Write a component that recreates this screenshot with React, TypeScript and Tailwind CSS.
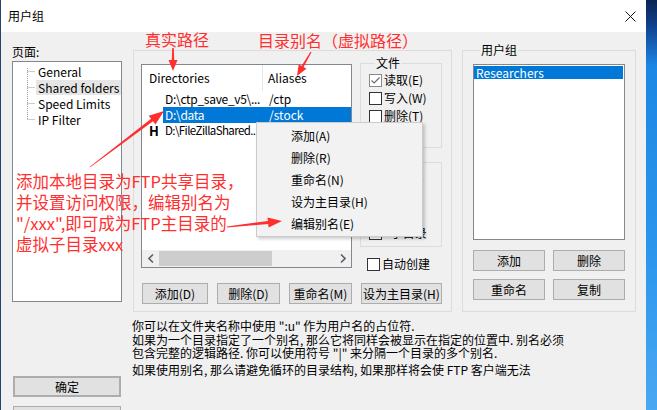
import React from "react";

const RED = "#ff2f2f";

// tapered arrow polygon: thin tail, wide head
function arrowPoints(x1: number, y1: number, x2: number, y2: number, head = 12, wing = 5, shaft = 1.5, tail = 0.5) {
  const dx = x2 - x1;
  const dy = y2 - y1;
  const len = Math.hypot(dx, dy);
  const ux = dx / len;
  const uy = dy / len;
  const nx = -uy;
  const ny = ux;
  const bx = x2 - ux * head;
  const by = y2 - uy * head;
  const p = (x: number, y: number) => `${x.toFixed(1)},${y.toFixed(1)}`;
  return [
    p(x1 + nx * tail, y1 + ny * tail),
    p(bx + nx * shaft, by + ny * shaft),
    p(bx + nx * wing, by + ny * wing),
    p(x2, y2),
    p(bx - nx * wing, by - ny * wing),
    p(bx - nx * shaft, by - ny * shaft),
    p(x1 - nx * tail, y1 - ny * tail),
  ].join(" ");
}

function Check({ label, checked = false }: { label: string; checked?: boolean }) {
  return (
    <div className="flex h-[18px] items-center gap-[2px] whitespace-nowrap">
      <span
        className={`flex h-[13px] w-[13px] shrink-0 items-center justify-center border bg-white ${
          checked ? "border-[#8a8a8a]" : "border-[#333333]"
        }`}
      >
        {checked && (
          <svg width="9" height="7" viewBox="0 0 9 7">
            <polyline points="0.5,3.5 3.2,6 8.5,0.5" fill="none" stroke="#6e6e6e" strokeWidth="1.2" />
          </svg>
        )}
      </span>
      <span className="leading-[14px]">{label}</span>
    </div>
  );
}

function Btn({ children, className = "" }: { children: React.ReactNode; className?: string }) {
  return (
    <button className={`flex h-[21px] shrink-0 items-center justify-center border border-[#adadad] bg-[#e1e1e1] leading-[14px] ${className}`}>
      {children}
    </button>
  );
}

function Chevron({ dir }: { dir: "left" | "right" }) {
  return (
    <svg width="6" height="9" viewBox="0 0 6 9">
      <polyline
        points={dir === "left" ? "5,0.5 1,4.5 5,8.5" : "1,0.5 5,4.5 1,8.5"}
        fill="none"
        stroke="#606060"
        strokeWidth="1.6"
      />
    </svg>
  );
}

const dirs = [
  { icon: "", path: "D:\\ctp_save_v5\\...", alias: "/ctp", sel: false, tight: false },
  { icon: "", path: "D:\\data", alias: "/stock", sel: true, tight: false },
  { icon: "H", path: "D:\\FileZillaShared...", alias: "", sel: false, tight: true },
];

const menuItems = ["添加(A)", "删除(R)", "重命名(N)", "设为主目录(H)", "编辑别名(E)"];

export default function App() {
  return (
    <div className="relative flex h-[410px] w-[657px] overflow-hidden bg-[linear-gradient(180deg,#0b2452_0%,#0f3f8a_6%,#1c86e4_16%,#2b95ec_60%,#4aa8f2_100%)] font-['Noto_Sans_CJK_SC',sans-serif] text-[12px] text-black">
      {/* dialog window */}
      <div className="flex h-full w-[646px] shrink-0 flex-col overflow-hidden border-l border-[#23446f] bg-[#f0f0f0]">
        {/* title bar */}
        <div className="flex h-[32px] shrink-0 items-center justify-between bg-white pl-[7px] pr-[10px]">
          <span className="text-[12px] leading-[14px]">用户组</span>
          <svg width="11" height="11" viewBox="0 0 11 11">
            <path d="M0.5 0.5 L10.5 10.5 M10.5 0.5 L0.5 10.5" stroke="#111" strokeWidth="1" />
          </svg>
        </div>

        <div className="flex min-h-0 flex-1 pl-[11px]">
          {/* left column: pages */}
          <div className="flex w-[110px] shrink-0 flex-col">
            <div className="mt-[13px] leading-[14px]">页面:</div>
            <div className="relative mt-[2px] h-[241px] shrink-0 border border-[#828790] bg-white pt-[1px]">
              <svg className="absolute left-0 top-0" width="30" height="70">
                <g stroke="#9a9a9a" strokeWidth="1" strokeDasharray="1 1">
                  <line x1="14.5" y1="6" x2="14.5" y2="57" />
                  <line x1="14.5" y1="9.5" x2="22" y2="9.5" />
                  <line x1="14.5" y1="25.5" x2="22" y2="25.5" />
                  <line x1="14.5" y1="41.5" x2="22" y2="41.5" />
                  <line x1="14.5" y1="57.5" x2="22" y2="57.5" />
                </g>
              </svg>
              {["General", "Shared folders", "Speed Limits", "IP Filter"].map((t) => (
                <div key={t} className="flex h-[16px] items-center whitespace-nowrap">
                  <span
                    className={`ml-[23px] px-[2px] leading-[15px] ${t === "Shared folders" ? "bg-[#e5e5e5]" : ""}`}
                  >
                    {t}
                  </span>
                </div>
              ))}
            </div>
            <Btn className="ml-[1px] mt-[74px] w-[108px] border-2 border-[#0078d7]">确定</Btn>
            <Btn className="ml-[1px] mt-[9px] w-[108px]">取消</Btn>
          </div>

          {/* right part */}
          <div className="ml-[11px] flex w-[503px] shrink-0 flex-col pt-[11px]">
            <div className="flex items-start gap-[10px]">
              {/* shared folders group */}
              <div className="mt-[7px] box-border h-[262px] w-[319px] shrink-0 border border-[#dcdcdc] pl-[7px] pt-[5px]">
                <div className="flex items-start gap-[8px]">
                  {/* directory list */}
                  <div className="mt-[8px] flex h-[204px] w-[211px] shrink-0 flex-col overflow-hidden border border-[#828790] bg-white">
                    <div className="flex h-[26px] shrink-0 items-center">
                      <div className="flex h-full w-[121px] items-center border-r border-[#e5e5e5] pl-[7px]">Directories</div>
                      <div className="pl-[5px]">Aliases</div>
                    </div>
                    {dirs.map((d) => (
                      <div key={d.path} className="flex h-[16px] shrink-0 items-center">
                        <div className="w-[21px] shrink-0 pl-[7px] text-[13px] font-bold leading-[16px]">{d.icon}</div>
                        <div className={`flex h-full flex-1 items-center ${d.sel ? "bg-[#0078d7] text-white" : ""}`}>
                          <span
                            className={`w-[100px] shrink-0 whitespace-nowrap pl-[2px] ${
                              d.tight ? "text-[11.5px] tracking-[-0.6px]" : "tracking-[-0.3px]"
                            }`}
                          >
                            {d.path}
                          </span>
                          <span className="pl-[6px]">{d.alias}</span>
                        </div>
                      </div>
                    ))}
                    <div className="flex-1" />
                    {/* horizontal scrollbar */}
                    <div className="flex h-[17px] shrink-0 items-center bg-[#f0f0f0]">
                      <div className="flex w-[17px] justify-center">
                        <Chevron dir="left" />
                      </div>
                      <div className="h-[15px] w-[113px] bg-[#cdcdcd]" />
                      <div className="flex-1" />
                      <div className="flex w-[17px] justify-center">
                        <Chevron dir="right" />
                      </div>
                    </div>
                  </div>

                  {/* permissions */}
                  <div className="flex w-[82px] shrink-0 flex-col">
                    <fieldset className="border border-[#dcdcdc] pb-[4px] pl-[8px] pt-[1px]">
                      <legend className="ml-[6px] px-[1px] leading-[14px]">文件</legend>
                      <Check label="读取(E)" checked />
                      <Check label="写入(W)" />
                      <Check label="删除(T)" />
                      <Check label="追加(A)" />
                    </fieldset>
                    <fieldset className="mt-[7px] border border-[#dcdcdc] pb-[4px] pl-[8px] pt-[1px]">
                      <legend className="ml-[6px] px-[1px] leading-[14px]">目录</legend>
                      <Check label="创建(C)" />
                      <Check label="删除(L)" />
                      <Check label="列表(I)" />
                      <Check label="+子目录" />
                    </fieldset>
                    <div className="mt-[8px] pl-[7px]">
                      <Check label="自动创建" />
                    </div>
                  </div>
                </div>
                <div className="ml-[1px] mt-[10px] flex gap-[9px]">
                  <Btn className="w-[66px]">添加(D)</Btn>
                  <Btn className="w-[63px]">删除(D)</Btn>
                  <Btn className="w-[63px]">重命名(M)</Btn>
                  <Btn className="w-[81px]">设为主目录(H)</Btn>
                </div>
              </div>

              {/* groups */}
              <fieldset className="box-border h-[269px] w-[174px] shrink-0 border border-[#dcdcdc] pl-[10px]">
                <legend className="ml-[7px] px-[1px] leading-[14px]">用户组</legend>
                <div className="mt-[7px] h-[176px] w-[152px] border border-[#828790] bg-white">
                  <div className="mt-[1px] flex h-[13px] w-[149px] items-center bg-[#0078d7] pl-[2px] leading-[13px] text-white">
                    Researchers
                  </div>
                </div>
                <div className="mt-[10px] flex gap-[8px]">
                  <Btn className="w-[72px]">添加</Btn>
                  <Btn className="w-[72px]">删除</Btn>
                </div>
                <div className="mt-[8px] flex gap-[8px]">
                  <Btn className="w-[72px]">重命名</Btn>
                  <Btn className="w-[72px]">复制</Btn>
                </div>
              </fieldset>
            </div>

            {/* help text */}
            <div className="-ml-[1px] mt-[7px] whitespace-nowrap">
              <p className="leading-[14px]">你可以在文件夹名称中使用 ":u" 作为用户名的占位符.</p>
              <p className="leading-[13px]">
                如果为一个目录指定了一个别名, 那么它将同样会被显示在指定的位置中. 别名必须
                <br />
                包含完整的逻辑路径. 你可以使用符号 "|" 来分隔一个目录的多个别名.
              </p>
              <p className="mt-[4px] leading-[13px]">如果使用别名, 那么请避免循环的目录结构, 如果那样将会使 FTP 客户端无法</p>
            </div>
          </div>
        </div>
      </div>

      {/* context menu */}
      <div className="absolute left-[256px] top-[122px] h-[115px] w-[167px] border border-[#cccccc] bg-[#f2f2f2] pt-[2px] shadow-[2px_2px_3px_rgba(0,0,0,0.2)]">
        {menuItems.map((m) => (
          <div key={m} className="flex h-[22px] items-center pl-[34px]">
            {m}
          </div>
        ))}
      </div>

      {/* red annotations */}
      <div className="absolute left-[145px] top-[29px] text-[16px] leading-[20px]" style={{ color: RED }}>
        真实路径
      </div>
      <div className="absolute left-[258px] top-[30px] text-[16px] leading-[20px]" style={{ color: RED }}>
        目录别名（虚拟路径）
      </div>
      <div className="absolute left-[16px] top-[171px] text-[16.5px] leading-[21px]" style={{ color: RED }}>
        添加本地目录为FTP共享目录，
        <br />
        并设置访问权限，编辑别名为
        <br />
        "/xxx",即可成为FTP主目录的
        <br />
        虚拟子目录xxx
      </div>
      <svg className="pointer-events-none absolute left-0 top-0" width="657" height="410">
        <g fill={RED}>
          <polygon points={arrowPoints(173, 48, 173, 71, 11, 4.5, 1.2, 0.8)} />
          <polygon points={arrowPoints(311, 52, 297, 76, 11, 4.5, 1.2, 0.6)} />
          <polygon points={arrowPoints(90, 167, 164, 111, 15, 5.5, 1.6, 0.4)} />
          <polygon points={arrowPoints(227, 227, 282, 221, 14, 5, 1.5, 0.5)} />
        </g>
      </svg>
    </div>
  );
}
